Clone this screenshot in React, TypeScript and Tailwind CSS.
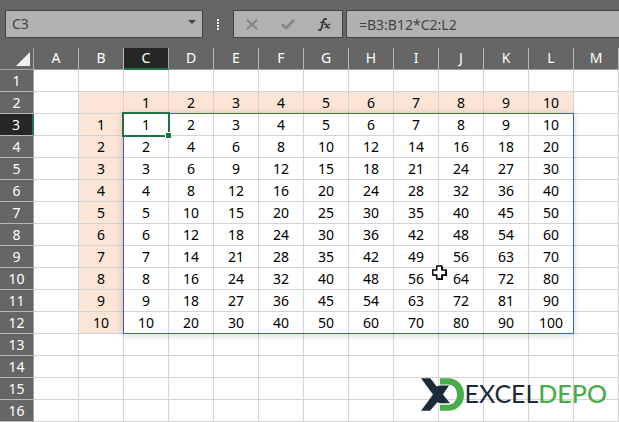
const columns = ["A", "B", "C", "D", "E", "F", "G", "H", "I", "J", "K", "L", "M"];
const rows = Array.from({ length: 16 }, (_, i) => i + 1);

// C3:L12 is the product of the labels in column B and row 2
function cellValue(row: number, col: number): number | null {
  if (row === 2 && col >= 2 && col <= 11) return col - 1;
  if (row >= 3 && row <= 12) {
    if (col === 1) return row - 2;
    if (col >= 2 && col <= 11) return (row - 2) * (col - 1);
  }
  return null;
}

function isLabel(row: number, col: number) {
  return (row === 2 && col >= 1 && col <= 11) || (col === 1 && row >= 3 && row <= 12);
}

function FormulaBar() {
  return (
    <div className="flex h-12 items-start pt-[10px] pl-[5px] text-[#444444]">
      <div className="flex h-7 w-[198px] shrink-0 border border-[#444444] bg-[#b1b1b1]">
        <input
          aria-label="Name box"
          defaultValue="C3"
          className="min-w-0 flex-1 bg-transparent pl-[6px] text-sm outline-none"
        />
        <button type="button" aria-label="Show names" className="flex w-5 items-center justify-center pb-1">
          <svg width="8" height="4" viewBox="0 0 8 4" fill="#444444" aria-hidden>
            <path d="M0 0h8L4 4z" />
          </svg>
        </button>
      </div>
      <div className="flex h-7 w-[30px] shrink-0 items-center justify-center">
        <svg width="2" height="11" viewBox="0 0 2 11" fill="#f0f0f0" aria-hidden>
          <path d="M0 0h2v2H0zM0 3h2v2H0zM0 6h2v2H0zM0 9h2v2H0z" />
        </svg>
      </div>
      <div className="flex h-7 w-[110px] shrink-0 items-center justify-around border border-[#444444] bg-[#b1b1b1]">
        <button type="button" aria-label="Cancel" className="flex w-6 justify-center">
          <svg width="12" height="11" viewBox="0 0 12 11" stroke="#858585" strokeWidth="1.9" aria-hidden>
            <path d="M.8.8 11.2 10.2M11.2.8.8 10.2" />
          </svg>
        </button>
        <button type="button" aria-label="Enter" className="flex w-6 justify-center">
          <svg width="14" height="11" viewBox="0 0 14 11" fill="none" stroke="#858585" strokeWidth="2.8" aria-hidden>
            <path d="M1 5.2 5 9 13 1" />
          </svg>
        </button>
        <button type="button" aria-label="Insert function" className="flex w-6 justify-center">
          <svg width="13" height="13" viewBox="0 0 13 13" fill="none" stroke="#383838" strokeLinecap="round" aria-hidden>
            <path d="M8.2 1.3C7 .2 5.8.8 5.3 2.8L3.6 10C3.1 12 2 12.6.8 11.8" strokeWidth="1.7" />
            <path d="M2.6 4.4h4.2" strokeWidth="1.3" />
            <path d="M6.8 6.2c1.4-.4 1.8.3 2.2 1.8s.9 2.2 2.4 1.5" strokeWidth="1.6" />
            <path d="M12 6.1c-1.4 0-3.4 3.6-5.2 3.6" strokeWidth="1.1" />
          </svg>
        </button>
      </div>
      <input
        aria-label="Formula bar"
        defaultValue="=B3:B12*C2:L2"
        className="ml-[3px] h-7 min-w-0 flex-1 border border-r-0 border-[#444444] bg-[#b1b1b1] pl-3 text-sm outline-none"
      />
    </div>
  );
}

function Logo() {
  return (
    <div className="absolute right-3 bottom-[11px] flex items-start">
      <svg width="43" height="33" viewBox="0 0 129 98" aria-hidden>
        <path
          d="M57 0H80C108 0 129 20 129 49S108 98 80 98H57V80H80C97 80 108 67 108 49S97 19 80 19H57z"
          fill="#45ad49"
        />
        <path d="M0 0H28L47 25 56 22H84L66 49 87 75H58L49 72 27 98H0L36 49z" fill="#1b2b38" />
      </svg>
      <span className="font-[Lato,sans-serif] text-[25px] leading-[30px] text-[#1b2b38]">
        EXCEL<span className="font-medium text-[#45ad49]">DEPO</span>
      </span>
    </div>
  );
}

// Spill range outline and active cell, laid on the same tracks as the table
function Selection() {
  return (
    <div className="pointer-events-none absolute inset-0 grid grid-cols-[34px_repeat(13,minmax(0,1fr))] grid-rows-[repeat(17,22px)]">
      <div className="col-start-4 col-end-14 row-start-4 row-end-14 -mt-px -ml-px border border-[#3465b4] shadow-[0_1px_8px_rgba(0,0,0,0.18)]" />
      <div className="relative col-start-4 row-start-4 -mt-[2px] -mr-px -mb-px -ml-[2px] border-2 border-[#217346]">
        <div className="absolute -right-[4px] -bottom-[4px] size-[7px] border border-white bg-[#217346]" />
      </div>
    </div>
  );
}

function Sheet() {
  return (
    <div className="relative">
      <table className="w-full table-fixed border-separate border-spacing-0 text-center text-sm leading-5">
        <thead>
          <tr className="text-white">
            <td className="h-[22px] w-[34px] border-r border-b border-[#a6a6a6] p-0">
              <svg width="14" height="14" viewBox="0 0 14 14" className="mt-px ml-4" aria-hidden>
                <path d="M14 0v14H0z" fill="#f0f0f0" />
              </svg>
            </td>
            {columns.map((name) => (
              <th
                key={name}
                scope="col"
                className={
                  name === "C"
                    ? "h-[22px] border-r border-b-2 border-r-[#a6a6a6] border-b-[#217346] bg-[#262626] p-0 align-top font-normal"
                    : "h-[22px] border-r border-b border-r-[#b8b8b8] border-b-[#a0a0a0] p-0 align-top font-normal"
                }
              >
                {name}
              </th>
            ))}
          </tr>
        </thead>
        <tbody>
          {rows.map((row) => (
            <tr key={row}>
              <th
                scope="row"
                className={
                  row === 3
                    ? "h-[22px] border-r-2 border-b border-r-[#217346] border-b-[#b8b8b8] bg-[#262626] p-0 font-normal text-white"
                    : "h-[22px] border-r border-b border-r-[#a0a0a0] border-b-[#b8b8b8] p-0 font-normal text-white"
                }
              >
                {row}
              </th>
              {columns.map((name, col) => (
                <td
                  key={name}
                  className={
                    isLabel(row, col)
                      ? "h-[22px] border-r border-b border-[#d4d4d4] bg-[#fce4d6] p-0"
                      : "h-[22px] border-r border-b border-[#d4d4d4] bg-white p-0"
                  }
                >
                  {cellValue(row, col)}
                </td>
              ))}
            </tr>
          ))}
        </tbody>
      </table>
      <Selection />
      <svg width="15" height="15" viewBox="0 0 15 15" className="absolute top-[217px] left-[432px]" aria-hidden>
        <path d="M6 2h5v3h4v6h-4v4H6v-4H2V5h4z" fill="#000" />
        <path d="M4.8 1h5v4h4v5h-4v4h-5v-4h-4V5h4z" fill="#fff" stroke="#000" strokeWidth="1.4" />
      </svg>
      <Logo />
    </div>
  );
}

export default function App() {
  return (
    <main className="overflow-hidden bg-[#666666] font-['Noto_Sans',sans-serif] text-black">
      <FormulaBar />
      <Sheet />
    </main>
  );
}
